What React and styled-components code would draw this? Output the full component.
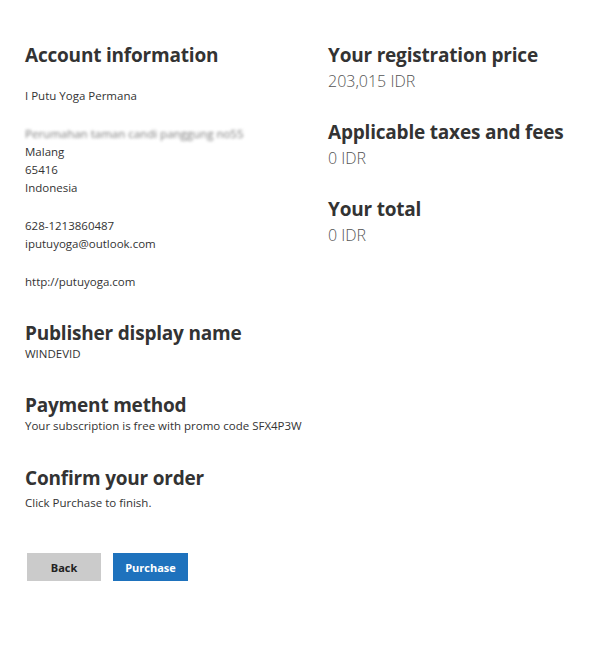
import React from 'react'
import styled, { createGlobalStyle } from 'styled-components'

const GlobalStyle = createGlobalStyle`
    body {
        margin: 0;
        background: #fff;
        font-family: "Open Sans", "Noto Sans", sans-serif;
        color: #333;
    }
`;

const Page = styled.div`
    width: 615px;
    height: 646px;
    padding: 42px 0 0 25px;
    box-sizing: border-box;
    display: grid;
    grid-template-columns: 303px 1fr;
    align-items: start;
`;

const Column = styled.div`
    display: flex;
    flex-direction: column;
`;

const Heading = styled.h2`
    margin: 0;
    font-size: 19px;
    line-height: 26px;
    font-weight: 700;
    color: #333;
    letter-spacing: -0.2px;
`;

const Text = styled.p`
    margin: 0;
    font-size: 11.5px;
    line-height: 18px;
    color: #333;
`;

const Note = styled(Text)`
    line-height: 16px;
`;

const Lines = styled.div`
    margin-top: ${props => props.top || 0}px;
    display: flex;
    flex-direction: column;
`;

const Gap = styled.div`
    height: 20px;
`;

const Blurred = styled(Text)`
    color: #7a7a7a;
    filter: blur(1.4px);
`;

const Section = styled.div`
    margin-top: ${props => props.top}px;
`;

const Price = styled.p`
    margin: 2px 0 0;
    font-size: 16px;
    font-weight: 300;
    line-height: 22px;
    color: #555;
`;

const PriceGroup = styled.div`
    margin-bottom: 27px;
`;

const Buttons = styled.div`
    display: flex;
    gap: 12px;
    margin-top: 41px;
    padding-left: 2px;
`;

const Button = styled.button`
    width: ${props => props.width}px;
    height: 28px;
    border: none;
    padding: 0;
    font-family: inherit;
    font-size: 11px;
    font-weight: 700;
    background: ${props => props.primary ? '#1e72bd' : '#cbcbcb'};
    color: ${props => props.primary ? '#fff' : '#222'};
`;

const App = () => {
    return (
        <>
            <GlobalStyle />
            <Page>
                <Column>
                    <Heading>Account information</Heading>
                    <Lines top={19}>
                        <Text>I Putu Yoga Permana</Text>
                        <Gap />
                        <Blurred>Perumahan taman candi panggung no55</Blurred>
                        <Text>Malang</Text>
                        <Text>65416</Text>
                        <Text>Indonesia</Text>
                        <Gap />
                        <Text>628-1213860487</Text>
                        <Text>iputuyoga@outlook.com</Text>
                        <Gap />
                        <Text>http://putuyoga.com</Text>
                    </Lines>

                    <Section top={29}>
                        <Heading>Publisher display name</Heading>
                        <Note>WINDEVID</Note>
                    </Section>

                    <Section top={30}>
                        <Heading>Payment method</Heading>
                        <Note>Your subscription is free with promo code SFX4P3W</Note>
                    </Section>

                    <Section top={31}>
                        <Heading>Confirm your order</Heading>
                        <Lines top={3}>
                            <Text>Click Purchase to finish.</Text>
                        </Lines>
                    </Section>

                    <Buttons>
                        <Button width={74}>Back</Button>
                        <Button width={75} primary>Purchase</Button>
                    </Buttons>
                </Column>

                <Column>
                    <PriceGroup>
                        <Heading>Your registration price</Heading>
                        <Price>203,015 IDR</Price>
                    </PriceGroup>
                    <PriceGroup>
                        <Heading>Applicable taxes and fees</Heading>
                        <Price>0 IDR</Price>
                    </PriceGroup>
                    <PriceGroup>
                        <Heading>Your total</Heading>
                        <Price>0 IDR</Price>
                    </PriceGroup>
                </Column>
            </Page>
        </>
    )
}

export default App
